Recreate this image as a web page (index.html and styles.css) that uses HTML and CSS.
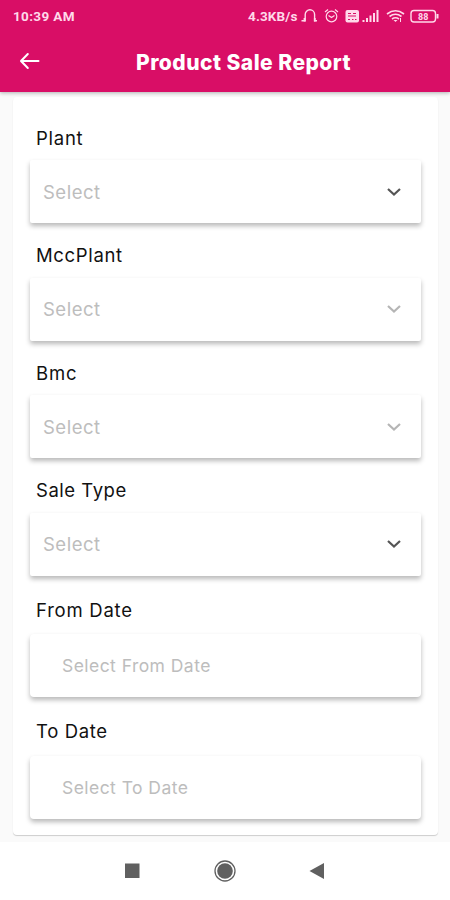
FILE: index.html
```html
<!DOCTYPE html>
<html lang="en">
<head>
<meta charset="utf-8">
<title>Product Sale Report</title>
<link rel="stylesheet" href="styles.css">
</head>
<body>
<header class="header">
  <div class="status">
    <span class="clock">10:39 AM</span>
    <span class="speed">4.3KB/s</span>
    <svg class="status-icons" width="142" height="16" viewBox="0 0 142 16" fill="none" stroke="currentColor" stroke-width="1.2">
      <path d="M.5 12.800h3.700V6.500a4.700 4.700 0 0 1 9.400 0v6.300h2.400" stroke-width="1.400"/><path d="M3.500 10v3.500M13.800 10v3.500" stroke-width="1.800"/>
      <circle cx="30.500" cy="8.500" r="5.300"/><path d="M24 4l3-2.500M37 4l-3-2.500M27.500 7.500l3 2 3-2"/>
      <rect x="44.500" y="2" width="13.500" height="12.500" rx="2" fill="currentColor" stroke="none"/>
      <path d="M47 5.500h3M52 5.500h3M47 8h8M47 11.500h2M51 11.500h1.500M54 11.500h1.500" stroke="#d90e66"/>
      <path d="M62.500 14v-2M66 14v-4M69.500 14V7.500M73 14V5M76.500 14V2" stroke-width="2"/>
      <path d="M86 6q8.500-6.500 17 0M88.500 8.500q6-4.500 12 0M91 11q3.500-2.500 7 0" stroke-width="1.600"/><path d="M92.500 12h4L94.500 14z" fill="currentColor" stroke="none"/><path d="M99.500 10v4" stroke-width="1"/>
      <rect x="110" y="2.500" width="24.500" height="11.500" rx="3" stroke-width="1.400"/><path d="M136.500 6v4.500" stroke-width="2"/>
      <text class="battery" x="117" y="11.500">88</text>
    </svg>
  </div>
  <div class="toolbar">
    <svg class="back" width="22" height="20" viewBox="0 0 22 20" fill="none" stroke="currentColor" stroke-width="2" stroke-linecap="round" stroke-linejoin="round"><path d="M19.500 10H2.500M8.800 3L2 10l6.800 7"/></svg>
    <h1 class="title">Product Sale Report</h1>
  </div>
</header>
<main class="page">
  <form class="card">
    <div class="field"><span class="label plant">Plant</span><div class="box"><span class="hint">Select</span><svg class="chevron" viewBox="0 0 16 10"><path d="M2 2l6 5.500L14 2"/></svg></div></div>
    <div class="field"><span class="label mcc">MccPlant</span><div class="box"><span class="hint">Select</span><svg class="chevron off" viewBox="0 0 16 10"><path d="M2 2l6 5.500L14 2"/></svg></div></div>
    <div class="field"><span class="label bmc">Bmc</span><div class="box"><span class="hint">Select</span><svg class="chevron off" viewBox="0 0 16 10"><path d="M2 2l6 5.500L14 2"/></svg></div></div>
    <div class="field"><span class="label type">Sale Type</span><div class="box"><span class="hint">Select</span><svg class="chevron" viewBox="0 0 16 10"><path d="M2 2l6 5.500L14 2"/></svg></div></div>
    <div class="field date"><span class="label from">From Date</span><div class="box"><span class="hint">Select From Date</span></div></div>
    <div class="field date"><span class="label to">To Date</span><div class="box"><span class="hint">Select To Date</span></div></div>
  </form>
</main>
<nav class="nav">
  <svg width="450" height="58" viewBox="0 0 450 58" fill="#606060">
    <rect x="125" y="21.500" width="14.500" height="14.500"/>
    <circle cx="225" cy="29" r="7.800"/><circle cx="225" cy="29" r="10" fill="none" stroke="#606060" stroke-width="1.300"/>
    <path d="M309.500 29L324 21v16z"/>
  </svg>
</nav>
</body>
</html>
```
FILE: styles.css
```css
* { box-sizing: border-box; }
body {
  margin: 0;
  height: 900px;
  display: flex;
  flex-direction: column;
  background: #fff;
  font-family: Inter, "Open Sans", sans-serif;
}
.header {
  height: 92px;
  flex: none;
  background: #d90e66;
  color: #fff;
  box-shadow: 0 1px 4px rgba(0, 0, 0, .3);
  z-index: 1;
}
.status {
  height: 32px;
  display: flex;
  align-items: center;
  padding-left: 13px;
  color: #ffd9ea;
  font: 700 13.5px Roboto, sans-serif;
}
.clock { width: 235px; letter-spacing: .35px; }
.speed { width: 53px; white-space: nowrap; letter-spacing: .15px; }
.battery { fill: currentColor; stroke: none; font: 700 9px Roboto, sans-serif; }
.toolbar { height: 60px; display: flex; align-items: center; padding-left: 19px; }
.back { margin-top: -2px; }
.title { margin: 0 0 0 95px; font-size: 21px; font-weight: 800; letter-spacing: .47px; white-space: nowrap; }
.page { height: 750px; flex: none; padding: 5px 12px 0 13px; background: #fafafa; }
.card {
  height: 738px;
  padding: 26.5px 17px 0;
  background: #fff;
  border-radius: 4px;
  box-shadow: 0 1px 1px rgba(0, 0, 0, .18);
}
.field { display: flex; flex-direction: column; gap: 8.5px; margin-bottom: 18px; }
.field.date { gap: 10.5px; margin: 20px 0 0; }
.label { height: 28px; line-height: 28px; padding-left: 6px; font-size: 18.5px; color: #111; }
.plant, .from { letter-spacing: .75px; }
.mcc, .to { letter-spacing: .65px; }
.bmc { letter-spacing: .9px; }
.type { letter-spacing: .52px; }
.box {
  height: 63px;
  display: flex;
  align-items: center;
  justify-content: space-between;
  padding: 0 19px 0 13px;
  background: #fff;
  border-radius: 2px;
  box-shadow: 0 3px 5px rgba(0, 0, 0, .28);
}
.date .box { padding-left: 32px; border-radius: 4px; }
.hint { font-size: 18.5px; color: #bdbdbd; letter-spacing: .5px; }
.date .hint { font-size: 17.5px; letter-spacing: .45px; }
.chevron { width: 16px; height: 10px; fill: none; stroke: #555; stroke-width: 2.2; }
.chevron.off { stroke: #b5b5b5; }
.nav { height: 58px; flex: none; }
.nav svg { display: block; }
```
